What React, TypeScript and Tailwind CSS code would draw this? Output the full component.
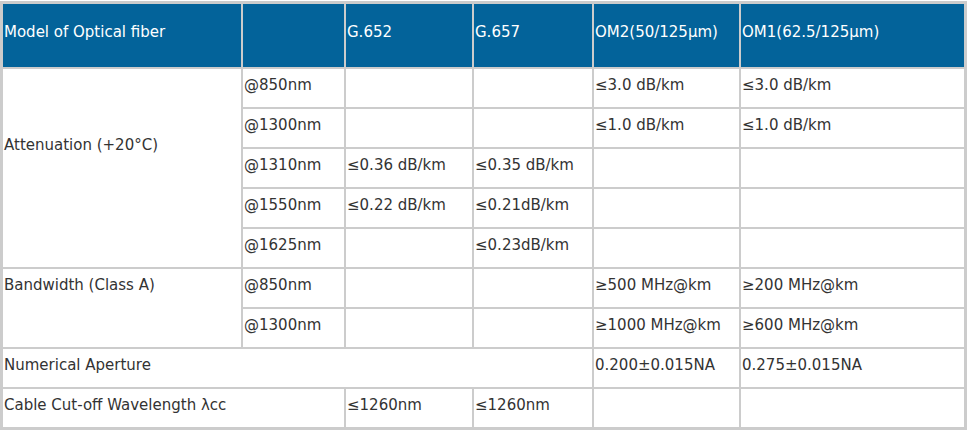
import React from 'react';

const HEAD = ['Model of Optical fiber', '', 'G.652', 'G.657', 'OM2(50/125μm)', 'OM1(62.5/125μm)'];

const td = 'bg-white align-middle pl-[1px] pb-[7px] font-normal';

export default function App() {
    return (
        <div className="w-[968px] h-[434px] bg-white pt-[1px] text-[15px] leading-[20px] text-[#333333] font-['DejaVu_Sans',Verdana,sans-serif]">
            <table className="w-[967px] table-fixed border-separate border-spacing-[2px] border border-[#cccccc] bg-[#cccccc]">
                <colgroup>
                    <col className="w-[238px]" />
                    <col className="w-[101px]" />
                    <col className="w-[126px]" />
                    <col className="w-[118px]" />
                    <col className="w-[145px]" />
                    <col className="w-[223px]" />
                </colgroup>
                <thead>
                    <tr className="h-[63px]">
                        {HEAD.map((h, i) => (
                            <th key={i} className="bg-[#03639a] text-white text-left align-middle pl-[1px] pb-[7px] font-normal">
                                {h}
                            </th>
                        ))}
                    </tr>
                </thead>
                <tbody>
                    <tr className="h-[38px]">
                        <td rowSpan={5} className="bg-white align-middle pl-[1px] pb-[47px]">Attenuation (+20°C)</td>
                        <td className={td}>@850nm</td>
                        <td className={td}></td>
                        <td className={td}></td>
                        <td className={td}>≤3.0 dB/km</td>
                        <td className={td}>≤3.0 dB/km</td>
                    </tr>
                    <tr className="h-[38px]">
                        <td className={td}>@1300nm</td>
                        <td className={td}></td>
                        <td className={td}></td>
                        <td className={td}>≤1.0 dB/km</td>
                        <td className={td}>≤1.0 dB/km</td>
                    </tr>
                    <tr className="h-[38px]">
                        <td className={td}>@1310nm</td>
                        <td className={td}>≤0.36 dB/km</td>
                        <td className={td}>≤0.35 dB/km</td>
                        <td className={td}></td>
                        <td className={td}></td>
                    </tr>
                    <tr className="h-[38px]">
                        <td className={td}>@1550nm</td>
                        <td className={td}>≤0.22 dB/km</td>
                        <td className={td}>≤0.21dB/km</td>
                        <td className={td}></td>
                        <td className={td}></td>
                    </tr>
                    <tr className="h-[38px]">
                        <td className={td}>@1625nm</td>
                        <td className={td}></td>
                        <td className={td}>≤0.23dB/km</td>
                        <td className={td}></td>
                        <td className={td}></td>
                    </tr>
                    <tr className="h-[38px]">
                        <td rowSpan={2} className="bg-white align-middle pl-[1px] pb-[47px]">Bandwidth (Class A)</td>
                        <td className={td}>@850nm</td>
                        <td className={td}></td>
                        <td className={td}></td>
                        <td className={td}>≥500 MHz@km</td>
                        <td className={td}>≥200 MHz@km</td>
                    </tr>
                    <tr className="h-[38px]">
                        <td className={td}>@1300nm</td>
                        <td className={td}></td>
                        <td className={td}></td>
                        <td className={td}>≥1000 MHz@km</td>
                        <td className={td}>≥600 MHz@km</td>
                    </tr>
                    <tr className="h-[38px]">
                        <td colSpan={4} className={td}>Numerical Aperture</td>
                        <td className={td}>0.200±0.015NA</td>
                        <td className={td}>0.275±0.015NA</td>
                    </tr>
                    <tr className="h-[38px]">
                        <td colSpan={2} className={td}>Cable Cut-off Wavelength λcc</td>
                        <td className={td}>≤1260nm</td>
                        <td className={td}>≤1260nm</td>
                        <td className={td}></td>
                        <td className={td}></td>
                    </tr>
                </tbody>
            </table>
        </div>
    );
}
